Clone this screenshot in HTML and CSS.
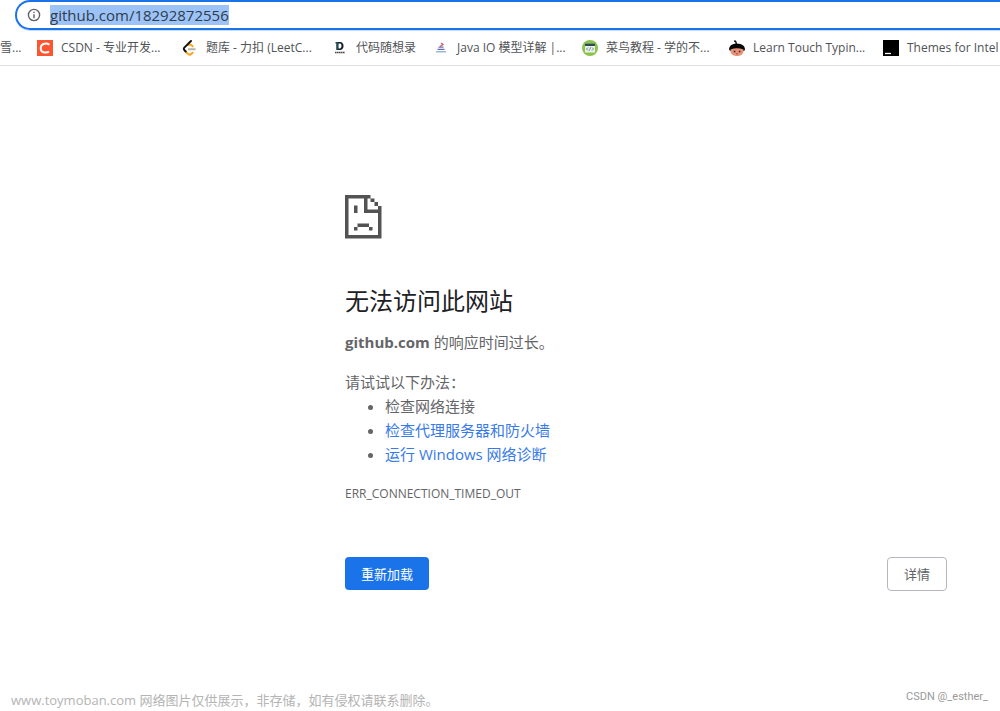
FILE: index.html
```html
<!DOCTYPE html>
<html lang="zh-CN">
<head>
<meta charset="utf-8">
<meta name="viewport" content="width=device-width, initial-scale=1">
<title>github.com</title>
<link rel="stylesheet" href="styles.css">
</head>
<body>
<header class="toolbar">
  <form class="address">
    <svg class="info" viewBox="0 0 14 14" aria-hidden="true"><circle cx="7" cy="7" r="5.6" fill="none" stroke="#5f6368" stroke-width="1.4"/><path d="M6.3 6.2h1.4v4H6.3zM6.3 3.7h1.4v1.4H6.3z" fill="#5f6368"/></svg>
    <label class="url"><span class="url-mark" aria-hidden="true">github.com/18292872556</span><input class="url-input" type="text" value="github.com/18292872556" aria-label="地址" spellcheck="false"></label>
  </form>
  <nav class="bookmarks" aria-label="书签">
    <a class="bookmark w-edge" href="#"><span class="label">雪...</span></a>
    <a class="bookmark w-csdn" href="#"><svg class="icon" viewBox="0 0 16 16" aria-hidden="true"><path d="M0 0h16v16H0z" fill="#fc5531"/><path d="M12.4 4.8C11 3.7 9.300 3.400 7.500 3.700C5.200 4.100 3.800 5.800 3.700 8C3.600 10.800 5.200 12.400 7.800 12.500C9.400 12.600 10.700 12.400 12 11.600" fill="none" stroke="#fff" stroke-width="2"/></svg><span class="label">CSDN - 专业开发...</span></a>
    <a class="bookmark w-leet" href="#"><svg class="icon" viewBox="0 0 16 16" aria-hidden="true"><g fill="none" stroke-linecap="round" stroke-width="1.900"><path d="M6.500 5Q8 4 9.500 5.300L10.700 6.400M3.500 11.300L5.600 13.600Q7.500 15.600 9.500 13.700L10.600 12.700" stroke="#ffa116"/><path d="M9 1L2.300 7.600Q1.300 8.800 2.300 10L3.700 11.500" stroke="#111"/><path d="M6.800 9.200h6" stroke="#b3b3b3"/></g></svg><span class="label">题库 - 力扣 (LeetC...</span></a>
    <a class="bookmark w-code" href="#"><svg class="icon" viewBox="0 0 16 16" aria-hidden="true"><path d="M4.500 2H8c4.800 0 4.800 8 0 8H4.500z M6.500 3.600v4.800H8c2 0 2-4.800 0-4.800z" fill="#15212a" fill-rule="evenodd"/><path d="M3.500 2H6v8H4.500V3.500h-1z" fill="#174f59"/><path d="M3 12.500h10" stroke="#444" stroke-width="1.600" stroke-dasharray="1.500 .4"/></svg><span class="label">代码随想录</span></a>
    <a class="bookmark w-java" href="#"><svg class="icon" viewBox="0 0 16 16" aria-hidden="true"><g fill="none" stroke-width="1.200"><path d="M8 3l2 1.500-3 2" stroke="#d75364"/><path d="M5.500 7.200h5M4.500 9.300h7" stroke="#6970ae"/><path d="M3 11.800h10" stroke="#7ca9d2"/></g></svg><span class="label">Java IO 模型详解 |...</span></a>
    <a class="bookmark w-rookie" href="#"><svg class="icon" viewBox="0 0 16 16" aria-hidden="true"><circle cx="8" cy="8" r="8" fill="#8bc34a"/><path d="M3 3.500h10v9H3z" fill="#e8f2e8"/><path d="M3 3.500h10V6H3z" fill="#2d4c50"/><path d="M6 7.500L4.500 9 6 10.500M10 7.500L11.500 9 10 10.500M8.600 7.300l-1.200 3.400" fill="none" stroke="#557176" stroke-width=".8"/></svg><span class="label">菜鸟教程 - 学的不...</span></a>
    <a class="bookmark w-typing" href="#"><svg class="icon" viewBox="0 0 16 16" aria-hidden="true"><path d="M5 1.500Q5-.2 6.600.4Q8 1 7.800 3.500C13 3.700 16 6 16 9.500Q15.500 11 14.300 11L1.500 11Q0 10.500 0 9C.3 6 2.500 4 6.600 3.500Q6.800 2 5 1.500" fill="#080808"/><path d="M1.500 9.500Q8 6.800 14.500 9.500C15 14 12 16 8 16S1 14 1.500 9.500" fill="#e8947a"/><path d="M4.800 10.700h1.600v1.600H4.800zM9.800 10.700h1.600v1.600H9.800z" fill="#302020"/><path d="M7 13.800h2" stroke="#a34e42"/></svg><span class="label">Learn Touch Typin...</span></a>
    <a class="bookmark" href="#"><svg class="icon" viewBox="0 0 16 16" aria-hidden="true"><path d="M0 0h16v16H0z"/><path d="M2 13.500h6" stroke="#fff" stroke-width="1.300"/></svg><span class="label">Themes for Intel</span></a>
  </nav>
</header>
<main class="error">
  <svg class="sad" viewBox="0 0 37 44" aria-hidden="true"><path fill="#535353" d="M0 0h25.500v3.500H22.500V14.500H33V11h3.500V43.500H0zM3.500 3.500V40H33V18H19V3.500zM25.500 3.500h4V7h-4zM29.500 7H33v4h-3.500zM9 10.500h3.500v7.500H9zM12.500 28.500h11.500V32H12.500zM9 32h3.500v3.500H9zM24 32h3.500v3.500H24z" fill-rule="evenodd"/></svg>
  <h1 class="title">无法访问此网站</h1>
  <p class="reason"><strong>github.com</strong> 的响应时间过长。</p>
  <p class="try">请试试以下办法：</p>
  <ul class="tips">
    <li>检查网络连接</li>
    <li><a class="link" href="#">检查代理服务器和防火墙</a></li>
    <li><a class="link" href="#">运行 Windows 网络诊断</a></li>
  </ul>
  <p class="code">ERR_CONNECTION_TIMED_OUT</p>
  <div class="actions">
    <button class="button primary" type="button">重新加载</button>
    <button class="button" type="button">详情</button>
  </div>
</main>
<footer class="footer">
  <span class="notice">www.toymoban.com 网络图片仅供展示，非存储，如有侵权请联系删除。</span>
  <span class="credit">CSDN @_esther_</span>
</footer>
</body>
</html>
```
FILE: styles.css
```css
* { box-sizing: border-box; }
body {
  margin: 0;
  min-height: 100vh;
  display: flex;
  flex-direction: column;
  overflow-x: hidden;
  background: #fff;
  color: #646568;
  font-family: "Open Sans", "Noto Sans CJK SC", sans-serif;
  font-size: 15px;
  line-height: 24px;
}
h1, p, ul { margin: 0; }
a { text-decoration: none; }
.toolbar { border-bottom: 1px solid #dedfe1; overflow: hidden; }
.address {
  display: flex;
  align-items: center;
  gap: 9px;
  height: 30px;
  margin-left: 15px;
  padding-left: 10px;
  border: 2px solid #1a73e8;
  border-right: 0;
  border-radius: 15px 0 0 15px;
  box-shadow: 0 1px #c5dbfb;
}
.info { width: 14px; height: 14px; flex: none; }
.url { flex: 1; position: relative; line-height: 20px; }
.url-mark { background: #9cc3f7; color: transparent; display: inline-block; vertical-align: top; }
.url-input {
  position: absolute;
  inset: 0;
  width: 100%;
  padding: 0;
  border: 0;
  outline: 0;
  background: transparent;
  color: #303b49;
  font: inherit;
}
.bookmarks { display: flex; gap: 16px; height: 35px; align-items: center; }
.bookmark {
  display: flex;
  flex: none;
  align-items: center;
  gap: 8px;
  color: #505356;
  font-size: 12px;
  line-height: 20px;
  white-space: nowrap;
}
.icon { width: 16px; height: 16px; flex: none; }
.w-edge { width: 21px; }
.w-csdn { width: 129px; }
.w-leet { width: 134px; }
.w-code { width: 85px; }
.w-java { width: 133px; }
.w-rookie { width: 131px; }
.w-typing { width: 138px; }
.error {
  width: 100%;
  max-width: 1000px;
  padding: 129px 53px 0 345px;
}
.sad { display: block; width: 37px; height: 44px; }
.title { margin-top: 44px; color: #202124; font-size: 24px; font-weight: 400; line-height: 36px; }
.reason { margin-top: 11px; }
.try { margin-top: 16px; }
.tips { padding-left: 40px; }
.link { color: #377ae8; }
.code { margin-top: 16px; font-size: 12px; }
.actions { display: flex; justify-content: space-between; align-items: flex-start; margin-top: 51px; }
.button {
  height: 34px;
  padding: 0 16px;
  border: 1px solid #b4b8be;
  border-radius: 4px;
  background: #fff;
  color: #5f6368;
  font: inherit;
  font-size: 13px;
}
.primary { height: 33px; border: 0; background: #1a73e8; color: #fff; }
.footer {
  display: flex;
  justify-content: space-between;
  align-items: center;
  margin-top: auto;
  padding: 0 12px 0 11px;
  line-height: 18px;
}
.notice { color: #b4b4b4; font-size: 13px; }
.credit { color: #999; font-family: Roboto, sans-serif; font-size: 11px; padding-bottom: 6px; line-height: 16px; }
```
